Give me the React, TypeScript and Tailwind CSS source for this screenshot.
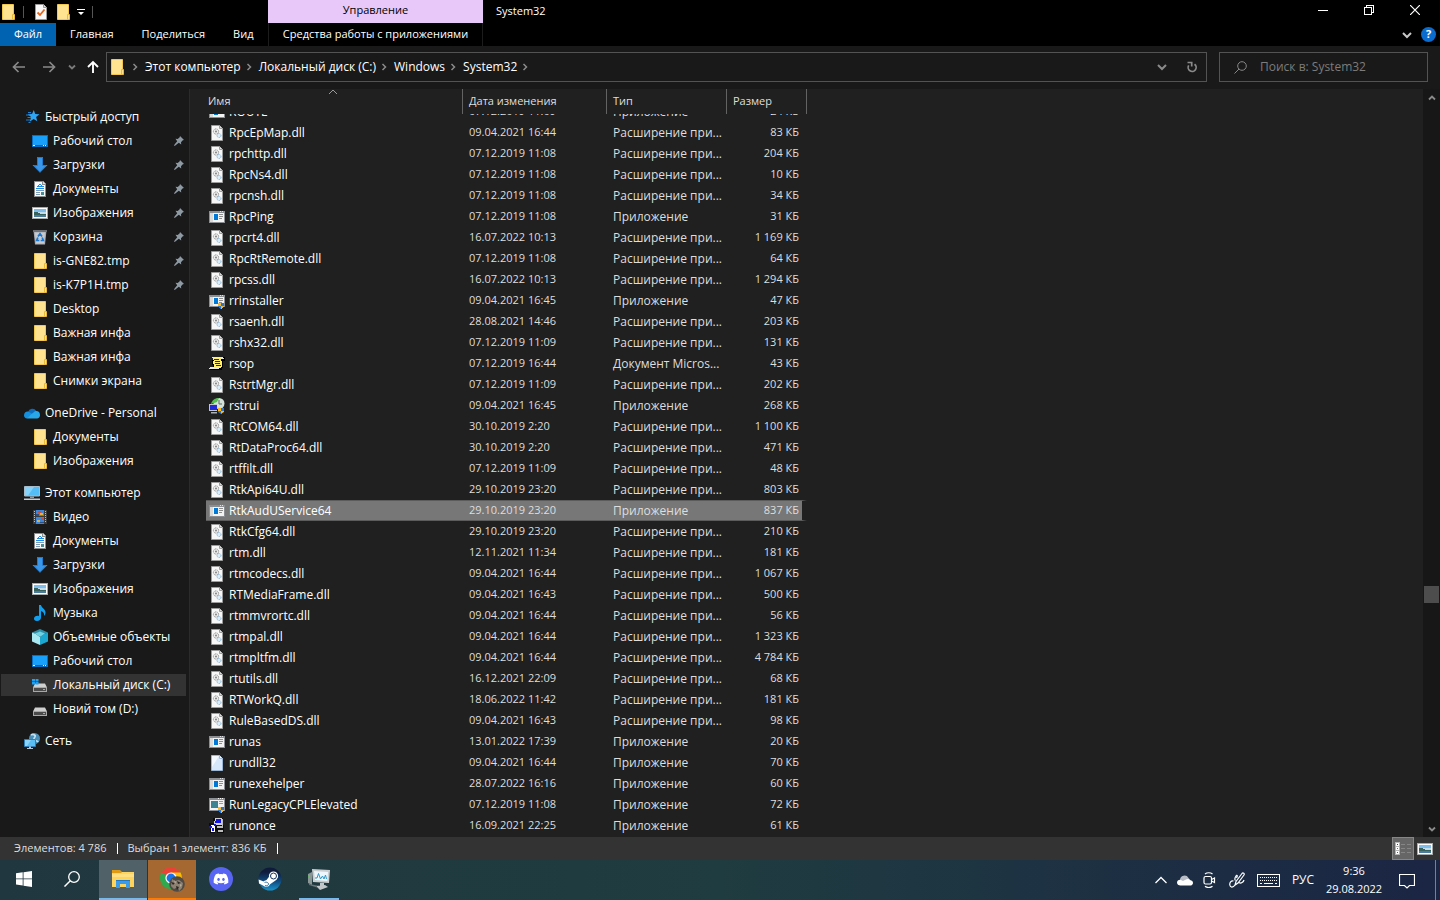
import { useEffect, useRef, useState } from "react";
import type { ReactNode } from "react";
import clsx from "clsx";
import { FaDiscord } from "react-icons/fa";

type FileIcon = "dll" | "exe" | "exeShield" | "script" | "restore" | "blank" | "legacy" | "once";

interface FileRow {
	name: string;
	date: string;
	type: string;
	size: string;
	icon: FileIcon;
}

const EXT = "Расширение при...";
const APP = "Приложение";

const dll = (name: string, date: string, size: string): FileRow => ({ name, date, type: EXT, size, icon: "dll" });
const app = (name: string, date: string, size: string, icon: FileIcon = "exe"): FileRow => ({
	name,
	date,
	type: APP,
	size,
	icon,
});

const files: FileRow[] = [
	app("ROUTE", "07.12.2019 11:09", "24 КБ"),
	dll("RpcEpMap.dll", "09.04.2021 16:44", "83 КБ"),
	dll("rpchttp.dll", "07.12.2019 11:08", "204 КБ"),
	dll("RpcNs4.dll", "07.12.2019 11:08", "10 КБ"),
	dll("rpcnsh.dll", "07.12.2019 11:08", "34 КБ"),
	app("RpcPing", "07.12.2019 11:08", "31 КБ"),
	dll("rpcrt4.dll", "16.07.2022 10:13", "1 169 КБ"),
	dll("RpcRtRemote.dll", "07.12.2019 11:08", "64 КБ"),
	dll("rpcss.dll", "16.07.2022 10:13", "1 294 КБ"),
	app("rrinstaller", "09.04.2021 16:45", "47 КБ", "exeShield"),
	dll("rsaenh.dll", "28.08.2021 14:46", "203 КБ"),
	dll("rshx32.dll", "07.12.2019 11:09", "131 КБ"),
	{ name: "rsop", date: "07.12.2019 16:44", type: "Документ Micros...", size: "43 КБ", icon: "script" },
	dll("RstrtMgr.dll", "07.12.2019 11:09", "202 КБ"),
	app("rstrui", "09.04.2021 16:45", "268 КБ", "restore"),
	dll("RtCOM64.dll", "30.10.2019 2:20", "1 100 КБ"),
	dll("RtDataProc64.dll", "30.10.2019 2:20", "471 КБ"),
	dll("rtffilt.dll", "07.12.2019 11:09", "48 КБ"),
	dll("RtkApi64U.dll", "29.10.2019 23:20", "803 КБ"),
	app("RtkAudUService64", "29.10.2019 23:20", "837 КБ"),
	dll("RtkCfg64.dll", "29.10.2019 23:20", "210 КБ"),
	dll("rtm.dll", "12.11.2021 11:34", "181 КБ"),
	dll("rtmcodecs.dll", "09.04.2021 16:44", "1 067 КБ"),
	dll("RTMediaFrame.dll", "09.04.2021 16:43", "500 КБ"),
	dll("rtmmvrortc.dll", "09.04.2021 16:44", "56 КБ"),
	dll("rtmpal.dll", "09.04.2021 16:44", "1 323 КБ"),
	dll("rtmpltfm.dll", "09.04.2021 16:44", "4 784 КБ"),
	dll("rtutils.dll", "16.12.2021 22:09", "68 КБ"),
	dll("RTWorkQ.dll", "18.06.2022 11:42", "181 КБ"),
	dll("RuleBasedDS.dll", "09.04.2021 16:43", "98 КБ"),
	app("runas", "13.01.2022 17:39", "20 КБ"),
	app("rundll32", "09.04.2021 16:44", "70 КБ", "blank"),
	app("runexehelper", "28.07.2022 16:16", "60 КБ"),
	app("RunLegacyCPLElevated", "07.12.2019 11:08", "72 КБ", "legacy"),
	app("runonce", "16.09.2021 22:25", "61 КБ", "once"),
];

/* ---------- icons ---------- */

function Svg({ children, size = 16, crisp }: { children: ReactNode; size?: number; crisp?: boolean }) {
	return (
		<svg
			width={size}
			height={size}
			viewBox={`0 0 ${size} ${size}`}
			fill="none"
			shapeRendering={crisp ? "crispEdges" : undefined}
			className="shrink-0"
			aria-hidden="true"
		>
			{children}
		</svg>
	);
}

function Folder() {
	return (
		<Svg>
			<path d="M2.500.5h11v15h-11z" fill="#ffe391" stroke="#f3c64f" />
			<path d="M12.500 10.500h2v5h-2z" fill="#ffe08a" stroke="#e9b93c" />
		</Svg>
	);
}

function Desktop() {
	return (
		<Svg crisp>
			<path d="M0 2h16v12H0z" fill="#0a6fc2" />
			<path d="M1 3h14v9H1z" fill="#18a0fb" />
			<path d="M1 12h14v1H1z" fill="#0b5ea8" />
			<path d="M1 12h2v1H1zM11 12h1v1h-1zM13 12h1v1h-1z" fill="#fff" />
		</Svg>
	);
}

function Download() {
	return (
		<Svg>
			<path d="M5 0h6v8h4.500L8 15.800.5 8H5z" fill="#3b97ea" />
			<path d="M5.500.5h5v8H14L8 15 2 8.500h3.500z" stroke="#2379cb" />
		</Svg>
	);
}

function DocumentIcon() {
	return (
		<Svg crisp>
			<path d="M2 0h9l3 3v13H2z" fill="#8d8d8d" />
			<path d="M3 1h7v3h3v11H3z" fill="#fafafa" />
			<path d="M11 1l2 2h-2z" fill="#ddd" />
			<path d="M7 3h2v1H7zM6 4h1v2H6zM9 4h1v2H9zM5 5h7v1H5zM4 7h8v1H4z" fill="#1e8be6" />
			<path d="M4 9h8v1H4zM4 11h4v1H4zM4 13h4v1H4z" fill="#7d9bb5" />
			<path d="M9 11h3v3H9z" fill="#4c8c94" />
		</Svg>
	);
}

function Picture() {
	return (
		<Svg crisp>
			<path d="M0 2h16v12H0z" fill="#a9a9a9" />
			<path d="M1 3h14v10H1z" fill="#fff" />
			<path d="M2 4h12v4H2z" fill="#7fbdea" />
			<path d="M2 7h12v2H2z" fill="#c4ddec" />
			<path d="M2 7h3l4 2h5v1H2z" fill="#37635c" />
			<path d="M2 10h12v2H2z" fill="#4a7ba3" />
		</Svg>
	);
}

function RecycleBin() {
	return (
		<Svg>
			<path d="M1.500 1.500h13L13 15.500H3z" fill="#a9adb3" />
			<path d="M1 1h14v2H1z" fill="#6e7276" />
			<path d="M3 3.500h10l-1 11H4z" fill="#c7cbd0" />
			<path d="M6 7.500L8 4.800l2 2.700M5.800 8.500L4.700 11.500h2.600M10.200 8.500l1.100 3H8.700" stroke="#1977cf" strokeWidth="1.700" />
		</Svg>
	);
}

function QuickAccess() {
	return (
		<Svg>
			<path
				d="M9.800 1l1.400 4 4.300.2-3.400 2.700 1.200 4.400-3.700-2.400-3.900 2.800 1.400-4.700L3.600 5.300l4.400-.2z"
				fill="#2ea6f7"
			/>
			<path d="M4 3.500h3M2 6h4M3.500 8.500H7M2 11h4M4.500 13.500h2" stroke="#1c7fd0" />
		</Svg>
	);
}

function OneDrive() {
	return (
		<Svg>
			<path d="M4 7a4.500 4.500 0 0 1 8.300-1L8 9.500z" fill="#0f6cbd" />
			<path d="M0 10.200C0 7.800 2 6.200 4.300 6.600L10 10l-7 3.500C1.200 13.500 0 12 0 10.200z" fill="#1490df" />
			<path d="M7.500 9l3.500-2.700c2.500-1 5 .8 5 3.700 0 2-1.300 3.500-3 3.500H3z" fill="#28a8ea" />
		</Svg>
	);
}

function Computer() {
	return (
		<Svg>
			<path d="M.5 1.500h15v9.500H.5z" fill="#55bdf5" stroke="#a6bccb" />
			<path d="M1 2h9L4 10.500H1z" fill="#85d3fb" />
			<path d="M6 11.500h4V13H6z" fill="#8aa0ae" />
			<path d="M0 13.500h16V15H0z" fill="#c3cddb" />
		</Svg>
	);
}

function Video() {
	return (
		<Svg crisp>
			<path d="M1 1h14v14H1z" fill="#3b3b3b" />
			<path d="M2 2h1v1H2zM2 4h1v1H2zM2 6h1v1H2zM2 8h1v1H2zM2 10h1v1H2zM2 12h1v1H2zM13 2h1v1h-1zM13 4h1v1h-1zM13 6h1v1h-1zM13 8h1v1h-1zM13 10h1v1h-1zM13 12h1v1h-1z" fill="#bdbdbd" />
			<path d="M4 1h8v6H4zM4 8h8v7H4z" fill="#3f87d9" />
			<path d="M6 2h3v2H6zM9 9h3v2H9z" fill="#c9503e" />
			<path d="M8 4h3v2H8zM5 11h3v2H5z" fill="#e2b33a" />
			<path d="M4 5h3v2H4zM8 13h4v1H8z" fill="#2c4f80" />
		</Svg>
	);
}

function Music() {
	return (
		<Svg>
			<path d="M7 0h2c.3 2.800 4.500 4 4.500 7.500 0 1.500-.6 2.800-1.500 3.500.6-2.500-.8-4.300-3-5v6.500C9 14.500 7.200 16 5 16s-3-1-3-2.500S3.600 10.700 5.500 10.700c.6 0 1.100.1 1.500.3z" fill="#12a0ee" />
		</Svg>
	);
}

function Objects3D() {
	return (
		<Svg>
			<path d="M0 3.500L8 0l8 3.500-3 1.500L8 3 3 5z" fill="#2f8fa6" />
			<path d="M0 3.500L4 5l4 3v8l-8-3.500z" fill="#a9e8f1" />
			<path d="M16 3.500L12 5 8 8v8l8-3.500z" fill="#1ba7d0" />
			<path d="M3 4.500L8 2.500l5 2L8 8z" fill="#6fd3e6" />
		</Svg>
	);
}

function Drive({ system }: { system?: boolean }) {
	return (
		<Svg>
			<path d="M3 6.500h10l2 4H1z" fill="#cfcfcf" />
			<path d="M1 10h14v5H1z" fill="#a8a8a8" />
			<path d="M2 11h12v3H2z" fill="#4b4b4b" />
			<path d="M11 12h2v1h-2z" fill="#5fe05f" />
			{system && <path d="M0 2h3v2.500H0zM3.500 2h3v2.500h-3zM0 5h3v2.500H0zM3.500 5h3v2.500h-3z" fill="#1ba1f5" />}
		</Svg>
	);
}

function Network() {
	return (
		<Svg>
			<circle cx="10.500" cy="5.500" r="5.500" fill="#4b8fb9" />
			<path d="M7 2c2-1.500 3-.5 4 .5S9.500 5 10 6.500s3.500 1 4 2.500" stroke="#bfe2f3" strokeWidth="1.800" />
			<path d="M.5 6.500h11v7H.5z" fill="#59bdf3" stroke="#2d7fb8" />
			<path d="M1 7h6l-4 6H1z" fill="#8ad5fb" />
			<path d="M3 15h6v1H3zM5 13.500h2V15H5z" fill="#b9c6d3" />
		</Svg>
	);
}

function Pin() {
	return (
		<svg width="10" height="10" viewBox="0 0 10 10" className="shrink-0" aria-hidden="true">
			<path d="M6 0l4 4-1.200.3-1.800 2 .2 2.200L4.800 6.800.7 10 0 9.300l3.200-4.100L1.500 2.800l2.200.2 2-1.800z" fill="#8e9aa3" />
		</svg>
	);
}

function Shield() {
	return (
		<>
			<path d="M9 10h3v3H9zM12 13h3v1l-3 2z" fill="#ffb91f" />
			<path d="M12 10h3v3h-3zM9 13h3v3l-3-2z" fill="#2b74c9" />
		</>
	);
}

function ExeBase() {
	return (
		<>
			<path d="M0 2h16v12H0z" fill="#8b8f92" />
			<path d="M1 4h14v9H1z" fill="#f3f3f3" />
			<path d="M11 2h1v1h-1zM13 2h1v1h-1z" fill="#dfe3e6" />
			<path d="M1 4h3v9H1z" fill="#dadada" />
			<path d="M5 5h4v6H5z" fill="#0078d7" />
			<path d="M10 5h4v1h-4zM10 7h4v1h-4zM10 9h3v1h-3z" fill="#8d8d8d" />
		</>
	);
}

function FileGlyph({ icon }: { icon: FileIcon }) {
	switch (icon) {
		case "dll":
			return (
				<Svg>
					<path d="M2.500.5h8l3 3v12h-11z" fill="#f7f7f7" stroke="#9c9c9c" />
					<path d="M10.500.5v3h3" fill="#ddd" stroke="#9c9c9c" />
					<circle cx="7" cy="6.500" r="2.600" fill="#eee" stroke="#8c8c8c" strokeDasharray="1.200 .6" />
					<circle cx="7" cy="6.500" r=".9" fill="#777" />
					<circle cx="10" cy="10.500" r="2" fill="#dceefa" stroke="#86b4d4" strokeDasharray="1.200 .6" />
				</Svg>
			);
		case "exe":
			return (
				<Svg crisp>
					<ExeBase />
				</Svg>
			);
		case "exeShield":
			return (
				<Svg crisp>
					<ExeBase />
					<Shield />
				</Svg>
			);
		case "script":
			return (
				<Svg crisp>
					<path d="M4 1h12v4h-2v7h-1v2H1v-3h3V9H3V4h1z" fill="#000" />
					<path d="M4 2h8v3h1v6h-1v1H6v-1H5V8H4V5h1V4H4z" fill="#ffef6b" />
					<path d="M3 1h11v1H3zM12 2h3v1h-3zM0 12h10v1H0zM1 11h5v1H1z" fill="#e6e6e6" />
					<path d="M5 3h5v1H5zM6 5h5v1H6zM6 7h5v1H6zM7 9h5v1H7z" fill="#1b1bb0" />
				</Svg>
			);
		case "restore":
			return (
				<Svg>
					<circle cx="10" cy="5.500" r="5.500" fill="#d4e2da" />
					<path d="M10 2v4h3" stroke="#586b62" />
					<path d="M2 6c1-4 4-6 8-6L8 4z" fill="#4fc04a" />
					<path d="M0 6h8v7H0z" fill="#c2c6cc" />
					<path d="M1 7h7v5H1z" fill="#1e2bd6" />
					<path d="M2 14h6v1.500H2z" fill="#aab0b6" />
					<Shield />
				</Svg>
			);
		case "blank":
			return (
				<Svg>
					<path d="M2.500.5h8l3 3v12h-11z" fill="#d7e8fb" stroke="#9cb6d6" />
					<path d="M3 1h7L3 12z" fill="#f4f9ff" />
					<path d="M10.500.5v3h3" fill="#fff" stroke="#9cb6d6" />
				</Svg>
			);
		case "legacy":
			return (
				<Svg crisp>
					<path d="M0 1h16v13H0z" fill="#8b8f92" />
					<path d="M1 3h14v10H1z" fill="#f3f3f3" />
					<path d="M9 1h1v1H9zM11 1h1v1h-1zM13 1h1v1h-1z" fill="#fff" />
					<path d="M2 4h7v7H2z" fill="#3d8391" />
					<path d="M10 4h4v1h-4zM10 6h4v1h-4z" fill="#9a9a9a" />
					<Shield />
				</Svg>
			);
		case "once":
			return (
				<Svg crisp>
					<path d="M4 0h10v7h1v8H8v-2H6v2H1V9H0V5h5z" fill="#0c0c0c" />
					<path d="M6 0h7v7H5z" fill="#d0d0d0" />
					<path d="M7 1h5v4H6z" fill="#1414e0" />
					<path d="M8 8h6v2H8zM9 12h5v2H9zM13 1h1v8h-1z" fill="#bdbdbd" />
					<path d="M2 7h4v7H2z" fill="#fff" />
					<path d="M0 8h3v2H0zM3 10h2v3H3zM5 6h2v2H5z" fill="#1414e0" />
				</Svg>
			);
	}
}

function Chevron({ dir = "down", className }: { dir?: "down" | "right" | "up"; className?: string }) {
	const d = { down: "M1 3l4 4 4-4", right: "M3.500 2l3 3-3 3", up: "M1 7l4-4 4 4" }[dir];
	return (
		<svg width="10" height="10" viewBox="0 0 10 10" fill="none" stroke="currentColor" strokeWidth="1.500" className={clsx("shrink-0", className)} aria-hidden="true">
			<path d={d} />
		</svg>
	);
}

/* ---------- title bar and ribbon ---------- */

function TitleBar() {
	return (
		<header className="bg-black text-white">
			<div className="flex h-[23px]">
				<div className="flex w-[268px] items-center">
					<Folder />
					<span className="ml-[7px] h-3 w-px bg-[#555]" />
					<button aria-label="Свойства" className="ml-[9px]">
						<Svg>
							<path d="M2.500.5h8l3 3v12h-11z" fill="#fafafa" stroke="#9a9a9a" />
							<path d="M10.500.5v3h3" fill="#ddd" stroke="#9a9a9a" />
							<path d="M4.500 8.500L7 11l4.500-5.500" stroke="#e8661b" strokeWidth="1.800" />
						</Svg>
					</button>
					<button aria-label="Новая папка" className="ml-[6px]">
						<Folder />
					</button>
					<button aria-label="Настройка панели быстрого доступа" className="ml-[6px]">
						<svg width="8" height="8" viewBox="0 0 8 8" fill="#fff">
							<path d="M0 1h8v1H0zM1 4h6L4 7z" />
						</svg>
					</button>
					<span className="ml-[7px] h-3 w-px bg-[#555]" />
				</div>
				<div className="flex w-[215px] items-center justify-center bg-[#e8c8f8] pb-[2px] text-[11px] text-black">Управление</div>
				<h1 className="flex flex-1 items-center pl-[13px] text-[11px]">System32</h1>
				<div className="flex pb-[3px]">
					<button aria-label="Свернуть" className="flex w-[46px] items-center justify-center">
						<Svg size={10} crisp>
							<path d="M0 5h10v1H0z" fill="#fff" />
						</Svg>
					</button>
					<button aria-label="Восстановить" className="flex w-[46px] items-center justify-center">
						<Svg size={10} crisp>
							<path d="M.5 2.500h7v7h-7zM2.500 2V.5h7v7H8" stroke="#fff" />
						</Svg>
					</button>
					<button aria-label="Закрыть" className="flex w-12 items-center justify-center pr-[2px]">
						<Svg size={10}>
							<path d="M0 0l10 10M10 0L0 10" stroke="#fff" strokeWidth="1.200" />
						</Svg>
					</button>
				</div>
			</div>
			<nav className="flex h-[23px] text-[11px]">
				<div className="flex w-[268px]">
					<button className="w-14 shrink-0 bg-[#0063b1]">Файл</button>
					<button className="px-[14px]">Главная</button>
					<button className="px-[14px]">Поделиться</button>
					<button className="px-[14px]">Вид</button>
				</div>
				<button className="w-[215px] border-x border-[#1c1c1c]">Средства работы с приложениями</button>
				<div className="flex flex-1 items-center justify-end gap-[9px] pr-1">
					<button aria-label="Свернуть ленту" className="text-[#c8c8c8]">
						<Chevron className="[stroke-width:2]" />
					</button>
					<button aria-label="Справка" className="flex size-[15px] items-center justify-center rounded-full bg-[#0a6cce] font-bold">
						?
					</button>
				</div>
			</nav>
		</header>
	);
}

function AddressBar() {
	const crumbs = ["Этот компьютер", "Локальный диск (C:)", "Windows", "System32"];

	return (
		<div className="flex h-[43px] items-center bg-[#191919] pr-3 pb-px text-white">
			<div className="flex w-[106px] shrink-0 items-center pl-3">
				<button aria-label="Назад" className="text-[#8a8a8a]">
					<Svg size={14}>
						<path d="M13 7H1.500M6.500 2l-5 5 5 5" stroke="currentColor" strokeWidth="1.700" />
					</Svg>
				</button>
				<button aria-label="Вперед" className="ml-4 text-[#8a8a8a]">
					<Svg size={14}>
						<path d="M1 7h11.500M7.500 2l5 5-5 5" stroke="currentColor" strokeWidth="1.700" />
					</Svg>
				</button>
				<button aria-label="Последние расположения" className="ml-3 text-[#7a7a7a]">
					<Svg size={8}>
						<path d="M1 2.500l3 3 3-3" stroke="currentColor" strokeWidth="1.800" />
					</Svg>
				</button>
				<button aria-label="Вверх" className="ml-[10px]">
					<Svg size={14}>
						<path d="M7 13V2M2 7l5-5 5 5" stroke="#fff" strokeWidth="1.900" />
					</Svg>
				</button>
			</div>
			<div className="flex h-[30px] flex-1 items-center border border-[#535353] pl-[2px]">
				<Folder />
				<Chevron dir="right" className="ml-[5px] text-[#8a8a8a]" />
				{crumbs.map((crumb) => (
					<span key={crumb} className="flex items-center">
						<button className="pr-[3px] pl-[5px]">{crumb}</button>
						<Chevron dir="right" className="text-[#8a8a8a]" />
					</span>
				))}
				<span className="flex-1" />
				<button aria-label="Предыдущие расположения" className="mr-[11px] text-[#8a8a8a]">
					<Chevron className="[stroke-width:2]" />
				</button>
				<button aria-label="Обновить" className="flex w-7 justify-center text-[#8a8a8a]">
					<Svg size={12}>
						<path d="M8.500 3.200a4 4 0 1 1-5.800 1.200M1.500 1.500h4.200v4" stroke="currentColor" strokeWidth="1.700" />
					</Svg>
				</button>
			</div>
			<div className="ml-3 flex h-[30px] w-[209px] items-center border border-[#535353] pl-[14px]">
				<Svg size={13}>
					<circle cx="8" cy="5" r="4.300" stroke="#888" />
					<path d="M5 8l-4.500 4.500" stroke="#888" />
				</Svg>
				<input
					aria-label="Поиск в: System32"
					placeholder="Поиск в: System32"
					className="ml-[13px] min-w-0 flex-1 bg-transparent outline-none placeholder:text-[#7c7c7c]"
				/>
			</div>
		</div>
	);
}

/* ---------- navigation pane ---------- */

interface NavItem {
	label: string;
	icon: ReactNode;
	pinned?: boolean;
	active?: boolean;
}

const navGroups: { root: NavItem; items: NavItem[] }[] = [
	{
		root: { label: "Быстрый доступ", icon: <QuickAccess /> },
		items: [
			{ label: "Рабочий стол", icon: <Desktop />, pinned: true },
			{ label: "Загрузки", icon: <Download />, pinned: true },
			{ label: "Документы", icon: <DocumentIcon />, pinned: true },
			{ label: "Изображения", icon: <Picture />, pinned: true },
			{ label: "Корзина", icon: <RecycleBin />, pinned: true },
			{ label: "is-GNE82.tmp", icon: <Folder />, pinned: true },
			{ label: "is-K7P1H.tmp", icon: <Folder />, pinned: true },
			{ label: "Desktop", icon: <Folder /> },
			{ label: "Важная инфа", icon: <Folder /> },
			{ label: "Важная инфа", icon: <Folder /> },
			{ label: "Снимки экрана", icon: <Folder /> },
		],
	},
	{
		root: { label: "OneDrive - Personal", icon: <OneDrive /> },
		items: [
			{ label: "Документы", icon: <Folder /> },
			{ label: "Изображения", icon: <Folder /> },
		],
	},
	{
		root: { label: "Этот компьютер", icon: <Computer /> },
		items: [
			{ label: "Видео", icon: <Video /> },
			{ label: "Документы", icon: <DocumentIcon /> },
			{ label: "Загрузки", icon: <Download /> },
			{ label: "Изображения", icon: <Picture /> },
			{ label: "Музыка", icon: <Music /> },
			{ label: "Объемные объекты", icon: <Objects3D /> },
			{ label: "Рабочий стол", icon: <Desktop /> },
			{ label: "Локальный диск (C:)", icon: <Drive system />, active: true },
			{ label: "Новий том (D:)", icon: <Drive /> },
		],
	},
	{ root: { label: "Сеть", icon: <Network /> }, items: [] },
];

function NavLink({ item, root }: { item: NavItem; root?: boolean }) {
	return (
		<a
			href="#"
			className={clsx(
				"flex h-6 items-center gap-[5px] border-y border-[#191919] pr-[2px]",
				root ? "pl-[23px]" : "pl-[31px]",
				item.active && "bg-[#333]"
			)}
		>
			{item.icon}
			<span className="flex-1 whitespace-nowrap">{item.label}</span>
			{item.pinned && <Pin />}
		</a>
	);
}

function Sidebar() {
	return (
		<aside className="flex w-[190px] shrink-0 flex-col gap-2 border-r border-[#2b2b2b] bg-[#191919] pt-4 pr-[3px] pl-px text-white">
			{navGroups.map((group) => (
				<div key={group.root.label}>
					<NavLink item={group.root} root />
					{group.items.map((item, i) => (
						<NavLink key={i} item={item} />
					))}
				</div>
			))}
		</aside>
	);
}

/* ---------- file list ---------- */

function FileList() {
	const scroller = useRef<HTMLDivElement>(null);
	const [selected, setSelected] = useState("RtkAudUService64");

	useEffect(() => {
		// the first row sits partly under the header
		if (scroller.current) scroller.current.scrollTop = 13;
	}, []);

	const head = "sticky top-0 z-10 h-[25px] border-r border-[#636363] bg-[#202020] p-0 text-left text-[11px] font-normal text-[#dedede]";
	const cell = "h-[21px] p-0 whitespace-nowrap";

	return (
		<main ref={scroller} className="min-w-0 flex-1 overflow-hidden bg-[#202020] pl-4">
			<table className="mb-3 w-[601px] table-fixed border-separate border-spacing-0 text-[#dedede]">
				<colgroup>
					<col className="w-[257px]" />
					<col className="w-36" />
					<col className="w-[120px]" />
					<col className="w-20" />
				</colgroup>
				<thead>
					<tr>
						<th className={clsx(head, "pl-[2px]")}>
							Имя
							<Chevron dir="up" className="absolute top-[-2px] left-[122px] text-[#9a9a9a] [stroke-width:1]" />
						</th>
						<th className={clsx(head, "pl-[6px]")}>Дата изменения</th>
						<th className={clsx(head, "pl-[6px]")}>Тип</th>
						<th className={clsx(head, "pl-[6px]")}>Размер</th>
					</tr>
				</thead>
				<tbody>
					{files.map((file) => {
						const active = file.name === selected;
						const fill = active && "border-y border-y-[#5c5c5c] bg-[#777]";
						return (
							<tr key={file.name} onClick={() => setSelected(file.name)}>
								<td className={clsx(cell, fill, "pl-[3px]")}>
									<span className="flex items-center gap-1 text-white">
										<FileGlyph icon={file.icon} />
										{file.name}
									</span>
								</td>
								<td className={clsx(cell, fill, "pl-[6px] text-[11px]")}>{file.date}</td>
								<td className={clsx(cell, fill, "pl-[6px]")}>{file.type}</td>
								<td className={clsx(cell, fill, "border-r-[5px] border-r-transparent bg-clip-padding pr-[3px] text-right text-[11px]")}>
									{file.size}
								</td>
							</tr>
						);
					})}
				</tbody>
			</table>
		</main>
	);
}

function ScrollBar() {
	return (
		<div className="flex w-[17px] shrink-0 flex-col items-center bg-[#171717] text-[#8a8a8a]">
			<button aria-label="Прокрутить вверх" className="flex h-[17px] items-center">
				<Svg size={8}>
					<path d="M1 5.500l3-3 3 3" stroke="currentColor" strokeWidth="1.800" />
				</Svg>
			</button>
			<div className="flex w-full flex-1 flex-col items-center">
				<span className="grow-[480]" />
				<span className="h-[17px] w-[15px] bg-[#4d4d4d]" />
				<span className="grow-[217]" />
			</div>
			<button aria-label="Прокрутить вниз" className="flex h-[17px] items-center">
				<Svg size={8}>
					<path d="M1 2.500l3 3 3-3" stroke="currentColor" strokeWidth="1.800" />
				</Svg>
			</button>
		</div>
	);
}

function StatusBar() {
	return (
		<footer className="flex h-[23px] items-center bg-[#333] pl-[14px] text-[11px] text-[#dedede]">
			<span>Элементов: 4 786</span>
			<span className="mx-[10px] h-[11px] w-px bg-white" />
			<span>Выбран 1 элемент: 836 КБ</span>
			<span className="mx-[10px] h-[11px] w-px bg-white" />
			<span className="flex-1" />
			<button aria-label="Таблица" className="flex h-[23px] w-[22px] items-center justify-center border border-[#868686] bg-[#666]">
				<svg width="16" height="13" viewBox="0 0 16 13" shapeRendering="crispEdges">
					<path d="M0 0h5v13H0z" fill="#b5b5b5" />
					<path d="M1 1h3v3H1zM1 5h3v3H1zM1 9h3v3H1z" fill="#fff" />
					<path d="M2 2h1v1H2z" fill="#444" />
					<path d="M2 6h1v1H2z" fill="#1e80e0" />
					<path d="M2 10h1v1H2z" fill="#e02a2a" />
					<path d="M6 2h4v1H6zM12 2h4v1h-4zM6 6h4v1H6zM12 6h4v1h-4zM6 10h4v1H6zM12 10h4v1h-4z" fill="#858585" />
				</svg>
			</button>
			<button aria-label="Крупные значки" className="flex w-[26px] items-center justify-center pr-1">
				<Picture />
			</button>
		</footer>
	);
}

/* ---------- taskbar ---------- */

function TaskButton({ label, className, children }: { label: string; className?: string; children: ReactNode }) {
	return (
		<button aria-label={label} className={clsx("flex h-10 w-12 items-center justify-center border-b-2", className ?? "border-transparent")}>
			{children}
		</button>
	);
}

function Taskbar() {
	return (
		<footer className="flex h-10 bg-linear-to-r from-[#21373f] via-[#1f3c40] to-[#1b2544] text-white">
			<TaskButton label="Пуск">
				<Svg size={16}>
					<path d="M0 2.300l6.700-1v6.200H0zM7.500 1.200L16 0v7.500H7.500zM0 8.300h6.700v6.300L0 13.600zM7.500 8.300H16V16l-8.500-1.200z" fill="#fff" />
				</Svg>
			</TaskButton>
			<TaskButton label="Поиск">
				<Svg size={16}>
					<circle cx="10" cy="6" r="5.300" stroke="#fff" strokeWidth="1.300" />
					<path d="M6.300 9.800L.5 15.600" stroke="#fff" strokeWidth="1.400" />
				</Svg>
			</TaskButton>
			<div className="flex gap-px pl-[3px]">
				<TaskButton label="Проводник" className="border-[#76b9ed] bg-[#506168]">
					<svg width="22" height="18" viewBox="0 0 22 18">
						<path d="M0 0h8l2 2h11v5H0z" fill="#e09a13" />
						<path d="M0 3h9l1-1h12v15H0z" fill="#ffd45e" />
						<path d="M0 4h22v3H0z" fill="#ffdf80" />
						<path d="M4 10h14v8h-4v-4H8v4H4z" fill="#3a9be8" />
						<path d="M4 10h14v1H4z" fill="#2277c4" />
					</svg>
				</TaskButton>
				<TaskButton label="Google Chrome" className="border-[#ff7a00] bg-[#a56831]">
					<Svg size={26}>
						<circle cx="12" cy="12" r="11" fill="#2da94f" />
						<path d="M12 12L2.500 6.500A11 11 0 0 1 21.500 6.500z" fill="#ea4335" />
						<path d="M12 6.500h9.500a11 11 0 0 1-9.500 16.500l5-8z" fill="#fbbc04" />
						<circle cx="12" cy="12" r="5.600" fill="#fff" />
						<circle cx="12" cy="12" r="4.400" fill="#1a73e8" />
						<circle cx="18" cy="18" r="7.800" fill="#4f4a43" />
						<path d="M13 13l3 2 4-1 4 3-1 5-3 3-1-4-4 2-3-3z" fill="#8d8272" />
						<path d="M12 16l4 1-2 2zM18 15l4 2-3 1zM17 20l3 1-2 3z" fill="#2a2623" />
						<path d="M15 14l2 2-1 2zM21 18l2 1-2 2z" fill="#b5ab9c" />
					</Svg>
				</TaskButton>
				<TaskButton label="Discord">
					<span className="flex size-6 items-center justify-center rounded-full bg-[#5865f2]">
						<FaDiscord className="size-4" />
					</span>
				</TaskButton>
				<TaskButton label="Steam">
					<Svg size={24}>
						<defs>
							<linearGradient id="steam" x1="0" y1="0" x2="0" y2="1">
								<stop offset="0.200" stopColor="#101b3c" />
								<stop offset="0.600" stopColor="#0f4b7f" />
								<stop offset="1" stopColor="#1a94cd" />
							</linearGradient>
						</defs>
						<circle cx="12" cy="12" r="11.500" fill="url(#steam)" />
						<path d="M.6 12.500L7 15l5-6.500 4-3 4 4-2.500 4-6.500 4.500L7 19.500l-6-3z" fill="#fff" />
						<circle cx="15.500" cy="9" r="4.600" fill="#fff" />
						<circle cx="15.500" cy="9" r="3" fill="#fff" stroke="#14305c" />
						<circle cx="8.500" cy="16.500" r="3.200" fill="#fff" />
						<path d="M6.500 15.500c2-1 4 0 4 1.500s-1.800 2.200-3.500 1.500" stroke="#165f95" strokeWidth=".8" />
					</Svg>
				</TaskButton>
			</div>
			<button aria-label="Диспетчер задач" className="ml-[5px] flex h-10 w-10 items-center justify-center border-b-2 border-[#76b9ed]">
				<Svg size={24}>
					<path d="M1 7l4-2v13l-4-2z" fill="#8a9595" />
					<path d="M1.500 8H3v3H1.500z" fill="#48d048" />
					<path d="M5 2l18 1-1 13-16-1z" fill="#c9ced0" />
					<path d="M7 4l14 1-.7 9L8 13z" fill="#eef7fb" />
					<path d="M8 11h2l1.500-4.500 2 5.500 2-3 1.500 3 1.500-4 1 4" stroke="#2f97c9" />
					<path d="M13 16h4v3h-4zM9 19l9-1 3 2-8 3z" fill="#c2c8ca" />
					<path d="M2 17l8 1.500v2L2 18z" fill="#6d7677" />
				</Svg>
			</button>
			<div className="flex flex-1 items-center justify-end">
				<button aria-label="Отображать скрытые значки" className="flex w-6 justify-center">
					<Svg size={12}>
						<path d="M.5 9L6 3.500 11.500 9" stroke="#fff" strokeWidth="1.300" />
					</Svg>
				</button>
				<button aria-label="OneDrive" className="flex w-6 justify-center">
					<Svg size={16}>
						<path d="M3 8a4.500 4.500 0 0 1 8.500-2L15 10H3z" fill="#b9bec6" />
						<path d="M3.500 13.500C1.500 13.500 0 12.300 0 10.500S1.500 7.500 3.500 7.700L6 9l3-1.500c1-.8 3-.8 4 .7 2 0 3 1.200 3 2.700s-1.200 2.600-3 2.600z" fill="#fff" />
					</Svg>
				</button>
				<button aria-label="Собрание" className="flex w-6 justify-center">
					<Svg size={16}>
						<rect x="3" y="4.500" width="7.500" height="7.500" rx="1.500" stroke="#fff" strokeWidth="1.200" />
						<path d="M10.500 7.500l3-1.500v4.500l-3-1.500M4 2C6 .3 9.500.3 11.500 2M4 14.300c2 1.700 5.500 1.700 7.500 0" stroke="#fff" strokeWidth="1.200" />
					</Svg>
				</button>
				<button aria-label="Windows Ink" className="flex w-8 justify-center">
					<Svg size={16}>
						<path d="M6 13l1-3.500L13 1.500c1-1.200 3 .2 2 1.500L9 11zM7.500 6C9 3.500 8 2.500 7 4s-1.500 3.500-.5 4.500M4.500 9C2 8.500.5 10.500.8 13S4 16 6 13M10 10.500c2 1.500 4.500-.5 5-2.500" stroke="#fff" strokeWidth="1.200" />
					</Svg>
				</button>
				<button aria-label="Сенсорная клавиатура" className="flex w-[31px] justify-center">
					<svg width="23" height="13" viewBox="0 0 23 13" fill="none" shapeRendering="crispEdges">
						<path d="M.5.500h22v12H.5z" stroke="#fff" />
						<path d="M3 3.500h17M3 6.500h17" stroke="#fff" strokeDasharray="1 1" />
						<path d="M3 9.500h2M7 9.500h9M18 9.500h2" stroke="#fff" />
					</svg>
				</button>
				<button className="w-[38px]">РУС</button>
				<button className="w-16 text-center text-[11px] leading-[18px]">
					9:36
					<br />
					29.08.2022
				</button>
				<button aria-label="Центр уведомлений" className="flex w-[42px] justify-center pt-px">
					<Svg size={16}>
						<path d="M.5 1.500h15v11h-5L8 15l-2.500-2.500h-5z" stroke="#fff" strokeWidth="1.200" />
					</Svg>
				</button>
				<button aria-label="Свернуть все окна" className="ml-[7px] h-10 w-[5px] border-l border-[#76809c]" />
			</div>
		</footer>
	);
}

export default function App() {
	return (
		<div className="flex h-screen flex-col overflow-hidden bg-[#191919] font-['Open_Sans','Noto_Sans',sans-serif] text-xs">
			<TitleBar />
			<AddressBar />
			<div className="flex min-h-0 flex-1">
				<Sidebar />
				<FileList />
				<ScrollBar />
			</div>
			<StatusBar />
			<Taskbar />
		</div>
	);
}
